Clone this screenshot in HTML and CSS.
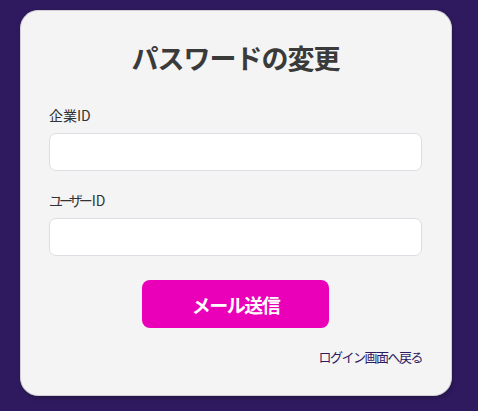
FILE: index.html
```html
<!DOCTYPE html>
<html lang="ja">
<head>
<meta charset="utf-8">
<title>パスワードの変更</title>
<link rel="stylesheet" href="styles.css">
</head>
<body>
<main class="page">
  <form class="card">
    <h1 class="title">パスワードの変更</h1>
    <div class="field">
      <label class="label" for="company">企業ID</label>
      <input class="input" id="company" type="text">
    </div>
    <div class="field">
      <label class="label" for="user"><span class="kana">ユーザー</span>ID</label>
      <input class="input" id="user" type="text">
    </div>
    <div class="actions">
      <button class="submit" type="button">メール送信</button>
    </div>
    <div class="links">
      <a class="back" href="#">ログイン画面へ戻る</a>
    </div>
  </form>
</main>
</body>
</html>
```

FILE: styles.css
```css
* { box-sizing: border-box; }

html, body {
  margin: 0;
  height: 100%;
}

body {
  background: #2f1a5f;
  font-family: "Noto Sans CJK JP", "Noto Sans", sans-serif;
  color: #333;
}

.page {
  padding: 10px 26px 15px 20px;
}

.card {
  background: #f4f4f4;
  border: 1px solid #cfcfd4;
  border-radius: 18px;
  box-shadow: 1px 2px 4px rgba(0, 0, 0, 0.25);
  padding: 27px 29px 29px 28px;
  display: flex;
  flex-direction: column;
}

.title {
  margin: 0 0 27px;
  font-size: 27px;
  line-height: 40px;
  font-weight: 700;
  text-align: center;
  color: #3a3a3a;
  letter-spacing: -1px;
}

.field {
  display: flex;
  flex-direction: column;
  margin-bottom: 19px;
}

.label {
  font-size: 14px;
  line-height: 20px;
  margin-bottom: 8px;
  color: #333;
}

.kana {
  letter-spacing: -4px;
  margin-right: 3px;
}

.input {
  height: 38px;
  border: 1px solid #dedde4;
  border-radius: 7px;
  background: #fff;
  font: inherit;
}

.actions {
  display: flex;
  justify-content: center;
  margin-top: 5px;
}

.submit {
  width: 187px;
  height: 48px;
  border: none;
  border-radius: 8px;
  background: #e900b8;
  color: #fff;
  font-family: "Noto Sans CJK JP", sans-serif;
  font-size: 19px;
  font-weight: 700;
  letter-spacing: -1.5px;
}

.links {
  display: flex;
  justify-content: flex-end;
  margin-top: 20px;
}

.back {
  font-size: 13px;
  line-height: 18px;
  color: #2f1a5f;
  text-decoration: none;
  letter-spacing: -1.5px;
}
```
